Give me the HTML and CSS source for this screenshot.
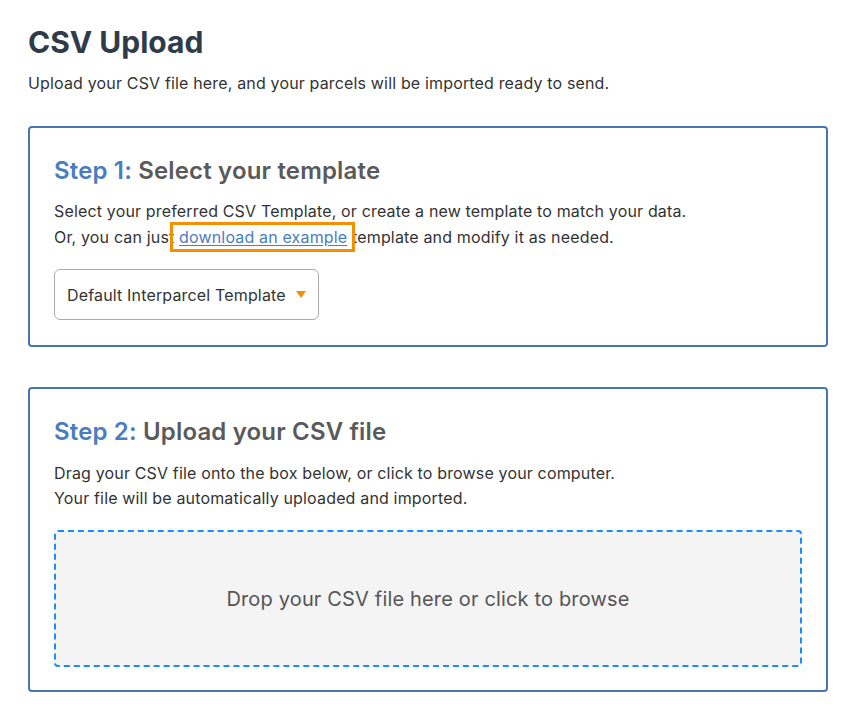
FILE: index.html
```html
<!DOCTYPE html>
<html lang="en">
<head>
<meta charset="utf-8">
<title>CSV Upload</title>
<link rel="stylesheet" href="styles.css">
</head>
<body>
<main class="page">
  <h1 class="title">CSV Upload</h1>
  <p class="lead">Upload your CSV file here, and your parcels will be imported ready to send.</p>

  <section class="card">
    <h2 class="step"><span class="step-num">Step 1:</span> Select your template</h2>
    <p class="text">Select your preferred CSV Template, or create a new template to match your data.<br>
    Or, you can just <a class="link" href="#">download an example</a> template and modify it as needed.</p>
    <div class="select">
      <span class="select-label">Default Interparcel Template</span>
      <span class="caret"></span>
    </div>
  </section>

  <section class="card card-upload">
    <h2 class="step"><span class="step-num">Step 2:</span> Upload your CSV file</h2>
    <p class="text text-tight">Drag your CSV file onto the box below, or click to browse your computer.<br>
    Your file will be automatically uploaded and imported.</p>
    <div class="dropzone">Drop your CSV file here or click to browse</div>
  </section>
</main>
</body>
</html>
```

FILE: styles.css
```css
* { box-sizing: border-box; }
html, body { margin: 0; padding: 0; background: #fff; }
body {
  font-family: Inter, "Noto Sans", "Liberation Sans", sans-serif;
  color: #333;
  letter-spacing: 0.01em;
}
.page {
  padding: 24px 32px 20px 28px;
  display: flex;
  flex-direction: column;
}
.title {
  margin: 0;
  font-size: 30px;
  font-weight: 700;
  color: #2f3b49;
  line-height: 36px;
  letter-spacing: 0;
}
.lead {
  margin: 10px 0 0;
  font-size: 16px;
  line-height: 26px;
  color: #333;
}
.card {
  margin-top: 30px;
  border: 2px solid #4677b0;
  border-radius: 4px;
  padding: 27px 24px 25px 24px;
}
.card + .card { margin-top: 40px; }
.card-upload { padding-bottom: 23px; }
.step {
  margin: 0;
  font-size: 24px;
  font-weight: 600;
  line-height: 32px;
  color: #5a5a5a;
}
.step-num { color: #4a7dbd; }
.text {
  margin: 11px 0 0;
  font-size: 16px;
  line-height: 26px;
  color: #333;
}
.text-tight { line-height: 25px; margin-top: 13px; }
.link {
  position: relative;
  color: #4a7dbd;
  text-decoration: underline;
  text-underline-offset: 2px;
}
.link::after {
  content: "";
  position: absolute;
  left: -9px;
  right: -8px;
  top: -5px;
  bottom: -5px;
  border: 3px solid #f58f00;
}
.select {
  margin-top: 19px;
  width: 265px;
  height: 51px;
  border: 1px solid #aaa;
  border-radius: 6px;
  display: flex;
  align-items: center;
  padding: 0 8px 0 12px;
  gap: 10px;
  white-space: nowrap;
}
.select-label {
  font-size: 16px;
  color: #333;
}
.caret {
  flex: none;
  width: 0;
  height: 0;
  border-left: 5px solid transparent;
  border-right: 5px solid transparent;
  border-top: 7px solid #f58f00;
}
.dropzone {
  margin-top: 19px;
  height: 137px;
  border: 2px dashed #1a8cff;
  border-radius: 4px;
  background: #f4f4f4;
  display: flex;
  align-items: center;
  justify-content: center;
  font-size: 20px;
  color: #555;
}
```
